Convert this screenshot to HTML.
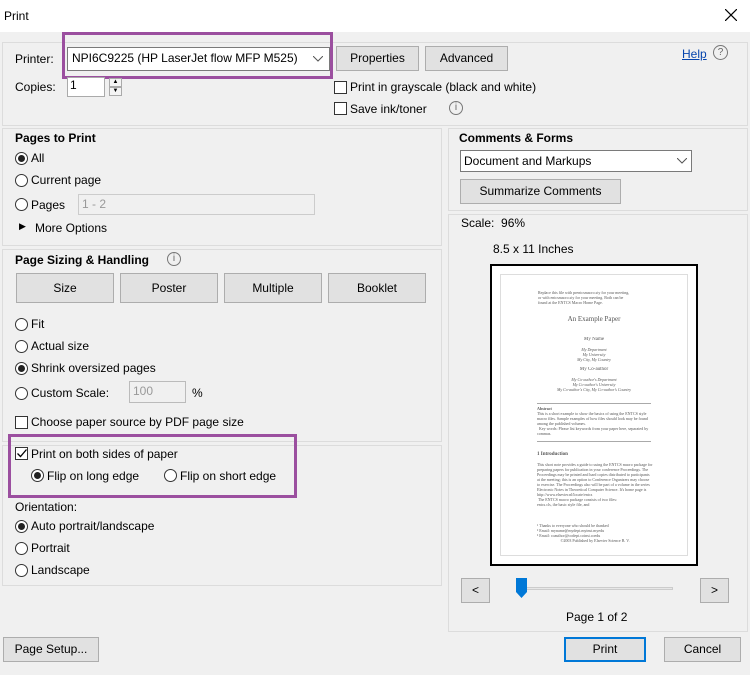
<!DOCTYPE html>
<html><head><style>
*{box-sizing:border-box}
body{margin:0;width:750px;height:675px;background:#f0f0f0;font-family:"Liberation Sans",sans-serif;font-size:12px;color:#000;position:relative;overflow:hidden}
.a{position:absolute;white-space:nowrap}
.panel{position:absolute;border:1px solid #dcdcdc}
.btn{position:absolute;background:#e1e1e1;border:1px solid #adadad;text-align:center;line-height:22px;font-size:12px}
.rad{position:absolute;width:13px;height:13px;border:1px solid #333;border-radius:50%;background:#fff}
.rad.on::after{content:"";position:absolute;left:2px;top:2px;width:7px;height:7px;border-radius:50%;background:#222}
.chk{position:absolute;width:13px;height:13px;border:1px solid #333;background:#fff}
.b{font-weight:bold}
.pur{position:absolute;border:3px solid #9b4f9f}
.pv div{white-space:normal;overflow:hidden}
</style></head><body>
<div class="a" style="left:0;top:0;width:750px;height:32px;background:#fff"></div>
<div class="a" style="left:4px;top:9px;font-size:12px">Print</div>
<svg class="a" style="left:725px;top:9px" width="12" height="12"><path d="M0 0L12 12M12 0L0 12" stroke="#000" stroke-width="1.2"/></svg>

<div class="panel" style="left:2px;top:42px;width:746px;height:84px"></div>
<div class="a" style="left:15px;top:52px">Printer:</div>
<div class="a" style="left:67px;top:47px;width:263px;height:24px;background:#fff;border:1px solid #7a7a7a"></div>
<div class="a" style="left:72px;top:51px">NPI6C9225 (HP LaserJet flow MFP M525)</div>
<svg class="a" style="left:313px;top:56px" width="10" height="6"><path d="M0 0L5 5L10 0" stroke="#555" fill="none"/></svg>
<div class="pur" style="left:62px;top:32px;width:271px;height:47px"></div>
<div class="btn" style="left:336px;top:46px;width:83px;height:25px">Properties</div>
<div class="btn" style="left:425px;top:46px;width:83px;height:25px">Advanced</div>
<div class="a" style="left:682px;top:47px;color:#0645ad;text-decoration:underline">Help</div>
<div class="a" style="left:713px;top:45px;width:15px;height:15px;border:1px solid #777;border-radius:50%;text-align:center;font-size:10px;line-height:13px;color:#666">?</div>
<div class="a" style="left:15px;top:80px">Copies:</div>
<div class="a" style="left:67px;top:77px;width:38px;height:20px;background:#fff;border:1px solid #aaa;padding-left:2px">1</div>
<div class="a" style="left:109px;top:78px;width:13px;height:9px;border:1px solid #aaa;background:#f4f4f4;font-size:6px;text-align:center;line-height:7px">▲</div>
<div class="a" style="left:109px;top:87px;width:13px;height:9px;border:1px solid #aaa;background:#f4f4f4;font-size:6px;text-align:center;line-height:7px">▼</div>
<div class="chk" style="left:334px;top:81px"></div><div class="a" style="left:350px;top:80px">Print in grayscale (black and white)</div>
<div class="chk" style="left:334px;top:102px"></div><div class="a" style="left:350px;top:102px">Save ink/toner</div>
<div class="a" style="left:449px;top:101px;width:14px;height:14px;border:1px solid #777;border-radius:50%;text-align:center;font-size:10px;line-height:12px;color:#666">i</div>

<div class="panel" style="left:2px;top:128px;width:440px;height:118px"></div>
<div class="a b" style="left:15px;top:131px">Pages to Print</div>
<div class="rad on" style="left:15px;top:152px"></div><div class="a" style="left:31px;top:151px">All</div>
<div class="rad" style="left:15px;top:174px"></div><div class="a" style="left:31px;top:173px">Current page</div>
<div class="rad" style="left:15px;top:198px"></div><div class="a" style="left:31px;top:198px">Pages</div>
<div class="a" style="left:78px;top:194px;width:237px;height:21px;border:1px solid #ccc;background:#f0f0f0;color:#999;padding:2px 3px">1 - 2</div>
<div class="a" style="left:19px;top:221px;font-size:9px">▶</div><div class="a" style="left:35px;top:221px">More Options</div>

<div class="panel" style="left:2px;top:249px;width:440px;height:193px"></div>
<div class="a b" style="left:15px;top:253px">Page Sizing &amp; Handling</div>
<div class="a" style="left:167px;top:252px;width:14px;height:14px;border:1px solid #777;border-radius:50%;text-align:center;font-size:10px;line-height:12px;color:#666">i</div>
<div class="btn" style="left:16px;top:273px;width:98px;height:30px;line-height:28px">Size</div>
<div class="btn" style="left:120px;top:273px;width:98px;height:30px;line-height:28px">Poster</div>
<div class="btn" style="left:224px;top:273px;width:98px;height:30px;line-height:28px">Multiple</div>
<div class="btn" style="left:328px;top:273px;width:98px;height:30px;line-height:28px">Booklet</div>
<div class="rad" style="left:15px;top:318px"></div><div class="a" style="left:31px;top:317px">Fit</div>
<div class="rad" style="left:15px;top:340px"></div><div class="a" style="left:31px;top:339px">Actual size</div>
<div class="rad on" style="left:15px;top:362px"></div><div class="a" style="left:31px;top:361px">Shrink oversized pages</div>
<div class="rad" style="left:15px;top:387px"></div><div class="a" style="left:31px;top:386px">Custom Scale:</div>
<div class="a" style="left:129px;top:381px;width:57px;height:22px;border:1px solid #bbb;background:#f0f0f0;color:#999;padding:2px 3px">100</div>
<div class="a" style="left:192px;top:386px">%</div>
<div class="chk" style="left:15px;top:416px"></div><div class="a" style="left:31px;top:415px">Choose paper source by PDF page size</div>

<div class="panel" style="left:2px;top:445px;width:440px;height:141px"></div>
<div class="chk" style="left:15px;top:447px"></div>
<svg class="a" style="left:17px;top:449px" width="10" height="9"><path d="M0.5 4.5L3.5 7.5L9.5 0.5" stroke="#000" stroke-width="1.3" fill="none"/></svg>
<div class="a" style="left:31px;top:447px">Print on both sides of paper</div>
<div class="rad on" style="left:31px;top:469px"></div><div class="a" style="left:47px;top:469px">Flip on long edge</div>
<div class="rad" style="left:164px;top:469px"></div><div class="a" style="left:180px;top:469px">Flip on short edge</div>
<div class="pur" style="left:8px;top:434px;width:289px;height:64px"></div>
<div class="a" style="left:15px;top:500px">Orientation:</div>
<div class="rad on" style="left:15px;top:520px"></div><div class="a" style="left:31px;top:519px">Auto portrait/landscape</div>
<div class="rad" style="left:15px;top:542px"></div><div class="a" style="left:31px;top:541px">Portrait</div>
<div class="rad" style="left:15px;top:564px"></div><div class="a" style="left:31px;top:563px">Landscape</div>

<div class="panel" style="left:448px;top:128px;width:300px;height:83px"></div>
<div class="a b" style="left:459px;top:131px">Comments &amp; Forms</div>
<div class="a" style="left:460px;top:150px;width:232px;height:22px;background:#fff;border:1px solid #7a7a7a;padding:3px 3px">Document and Markups</div>
<svg class="a" style="left:677px;top:158px" width="10" height="6"><path d="M0 0L5 5L10 0" stroke="#555" fill="none"/></svg>
<div class="btn" style="left:460px;top:179px;width:161px;height:25px">Summarize Comments</div>

<div class="panel" style="left:448px;top:214px;width:300px;height:418px"></div>
<div class="a" style="left:461px;top:216px">Scale:&nbsp; 96%</div>
<div class="a" style="left:493px;top:242px">8.5 x 11 Inches</div>
<div class="a pv" style="left:490px;top:264px;width:208px;height:302px;border:2px solid #000;background:#fff;padding:8px">
<div style="width:100%;height:100%;border:1px solid #ddd;position:relative;font-family:'Liberation Serif',serif;color:#555;font-size:4px;line-height:5px">
<div style="position:absolute;left:37px;top:15px;width:120px">Replace this file with prentcsmacro.sty for your meeting,<br>or with entcsmacro.sty for your meeting. Both can be<br>found at the ENTCS Macro Home Page.</div>
<div style="position:absolute;left:0;right:0;top:40px;text-align:center;font-size:7px;line-height:9px">An Example Paper</div>
<div style="position:absolute;left:0;right:0;top:62px;text-align:center;font-size:5px">My Name</div>
<div style="position:absolute;left:0;right:0;top:72px;text-align:center;font-style:italic">My Department<br>My University<br>My City, My Country</div>
<div style="position:absolute;left:0;right:0;top:92px;text-align:center;font-size:5px">My Co-author</div>
<div style="position:absolute;left:0;right:0;top:102px;text-align:center;font-style:italic">My Co-author's Department<br>My Co-author's University<br>My Co-author's City, My Co-author's Country</div>
<div style="position:absolute;left:36px;right:36px;top:128px;border-top:1px solid #aaa"></div>
<div style="position:absolute;left:36px;width:116px;top:131px;height:34px"><b>Abstract</b><br>This is a short example to show the basics of using the ENTCS style macro files. Sample examples of how files should look may be found among the published volumes.<br>&nbsp;&nbsp;Key words: Please list keywords from your paper here, separated by commas.</div>
<div style="position:absolute;left:36px;right:36px;top:166px;border-top:1px solid #aaa"></div>
<div style="position:absolute;left:36px;width:116px;top:176px;height:70px"><b style="font-size:5px">1 Introduction</b><br><br>This short note provides a guide to using the ENTCS macro package for preparing papers for publication in your conference Proceedings. The Proceedings may be printed and hard copies distributed to participants at the meeting; this is an option to Conference Organizers may choose to exercise. The Proceedings also will be part of a volume in the series Electronic Notes in Theoretical Computer Science. It's home page is http://www.elsevier.nl/locate/entcs<br>&nbsp;The ENTCS macro package consists of two files:<br>entcs.cls, the basic style file, and</div>
<div style="position:absolute;left:36px;width:116px;top:248px">¹ Thanks to everyone who should be thanked<br>² Email: myname@mydept.myinst.myedu<br>³ Email: coauthor@codept.coinst.coedu<br><center>©2003 Published by Elsevier Science B. V.</center></div>
</div></div>
<div class="btn" style="left:461px;top:578px;width:29px;height:25px">&lt;</div>
<div class="btn" style="left:700px;top:578px;width:29px;height:25px">&gt;</div>
<div class="a" style="left:516px;top:587px;width:157px;height:3px;background:#e7e7e7;border:1px solid #ccc"></div>
<div class="a" style="left:516px;top:578px;width:11px;height:20px;background:#0078d7;clip-path:polygon(0 0,100% 0,100% 70%,50% 100%,0 70%)"></div>
<div class="a" style="left:566px;top:610px">Page 1 of 2</div>

<div class="btn" style="left:3px;top:637px;width:96px;height:25px">Page Setup...</div>
<div class="btn" style="left:564px;top:637px;width:82px;height:25px;border:2px solid #0078d7;line-height:21px">Print</div>
<div class="btn" style="left:664px;top:637px;width:77px;height:25px">Cancel</div>
</body></html>
